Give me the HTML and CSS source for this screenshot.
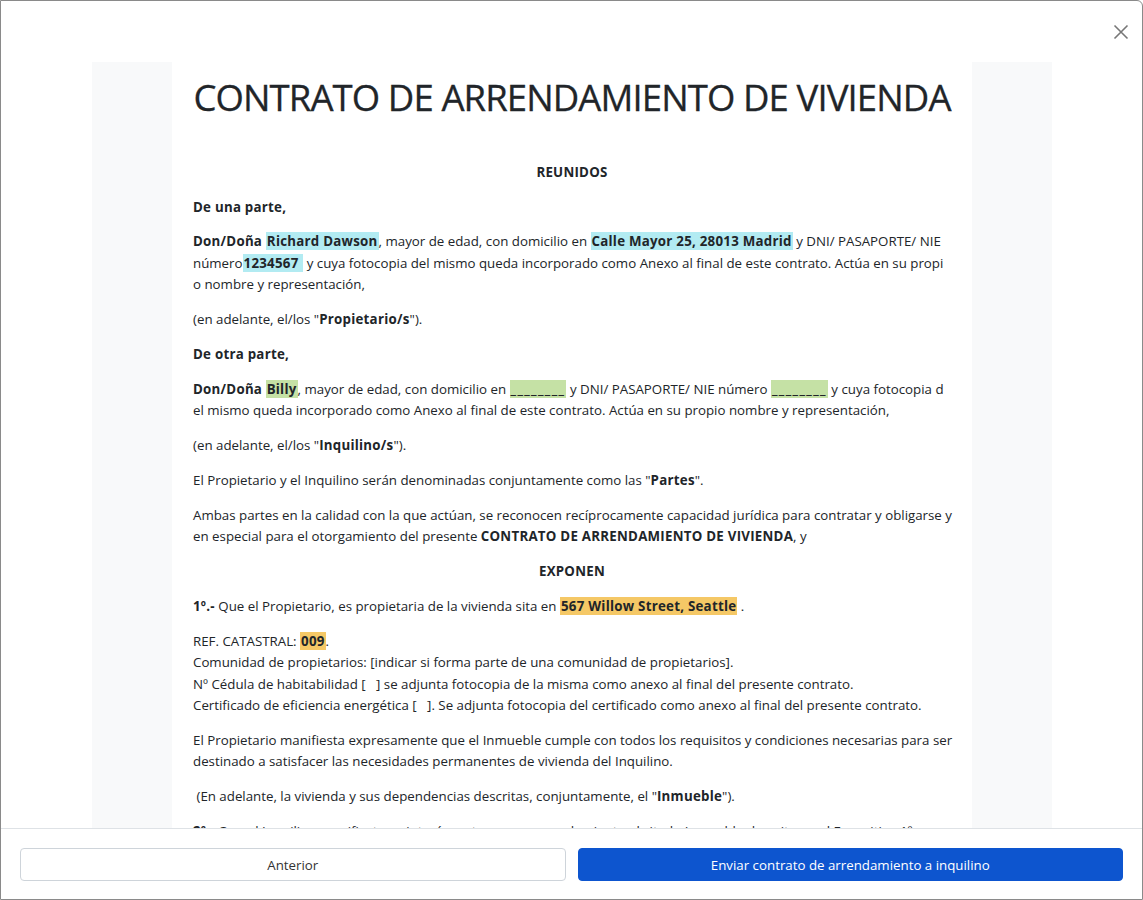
FILE: index.html
```html
<!DOCTYPE html>
<html lang="es">
<head>
<meta charset="utf-8">
<title>Contrato de arrendamiento</title>
<link rel="stylesheet" href="styles.css">
</head>
<body>
<div class="modal">
  <div class="modal-header">
    <button class="close" aria-label="Cerrar">
      <svg width="16" height="16" viewBox="0 0 16 16"><path d="M1.5 1.5 L14.5 14.5 M14.5 1.5 L1.5 14.5" stroke="#777" stroke-width="1.6" fill="none"/></svg>
    </button>
  </div>
  <div class="modal-body">
    <div class="doc-wrap">
      <div class="doc">
        <h1 class="doc-title">CONTRATO DE ARRENDAMIENTO DE VIVIENDA</h1>
        <p class="center"><b>REUNIDOS</b></p>
        <p><b>De una parte,</b></p>
        <p><b>Don/Doña <span class="hl hl-cyan">Richard Dawson</span></b>, mayor de edad, con domicilio en <span class="hl hl-cyan"><b>Calle Mayor 25, 28013 Madrid</b></span> y DNI/ PASAPORTE/ NIE<br>número<span class="hl hl-cyan"><b>1234567&nbsp;</b></span> y cuya fotocopia del mismo queda incorporado como Anexo al final de este contrato. Actúa en su propi<br>o nombre y representación,</p>
        <p>(en adelante, el/los "<b>Propietario/s</b>").</p>
        <p><b>De otra parte,</b></p>
        <p><b>Don/Doña</b> <span class="hl hl-green"><b>Billy</b></span>, mayor de edad, con domicilio en <span class="hl hl-green"><b class="blank">________</b></span> y DNI/ PASAPORTE/ NIE número <span class="hl hl-green"><b class="blank">________</b></span> y cuya fotocopia d<br>el mismo queda incorporado como Anexo al final de este contrato. Actúa en su propio nombre y representación,</p>
        <p>(en adelante, el/los "<b>Inquilino/s</b>").</p>
        <p>El Propietario y el Inquilino serán denominadas conjuntamente como las "<b>Partes</b>".</p>
        <p>Ambas partes en la calidad con la que actúan, se reconocen recíprocamente capacidad jurídica para contratar y obligarse y<br>en especial para el otorgamiento del presente <b>CONTRATO DE ARRENDAMIENTO DE VIVIENDA</b>, y</p>
        <p class="center"><b>EXPONEN</b></p>
        <p><b>1º.-</b> Que el Propietario, es propietaria de la vivienda sita en <span class="hl hl-yellow"><b>567 Willow Street, Seattle</b></span> .</p>
        <p>REF. CATASTRAL: <span class="hl hl-yellow"><b>009</b></span>.<br>Comunidad de propietarios: [indicar si forma parte de una comunidad de propietarios].<br>Nº Cédula de habitabilidad [&nbsp;&nbsp;&nbsp;] se adjunta fotocopia de la misma como anexo al final del presente contrato.<br>Certificado de eficiencia energética [&nbsp;&nbsp;&nbsp;]. Se adjunta fotocopia del certificado como anexo al final del presente contrato.</p>
        <p>El Propietario manifiesta expresamente que el Inmueble cumple con todos los requisitos y condiciones necesarias para ser<br>destinado a satisfacer las necesidades permanentes de vivienda del Inquilino.</p>
        <p>&nbsp;(En adelante, la vivienda y sus dependencias descritas, conjuntamente, el "<b>Inmueble</b>").</p>
        <p><b>2º.-</b> Que el Inquilino manifiesta su interés en tomar en arrendamiento el citado Inmueble descrito en el Expositivo 1º,<br>para su uso como vivienda permanente.</p>
      </div>
    </div>
  </div>
  <div class="modal-footer">
    <button class="btn btn-light">Anterior</button>
    <button class="btn btn-primary">Enviar contrato de arrendamiento a inquilino</button>
  </div>
</div>
</body>
</html>
```

FILE: styles.css
```css
* { box-sizing: border-box; }
html, body { margin: 0; padding: 0; background: #fff; }
body {
  font-family: "Open Sans", "Noto Sans", sans-serif;
  color: #212529;
}
.modal {
  width: 1143px;
  height: 900px;
  border: 1px solid #8a8a8a;
  border-radius: 0 6px 0 0;
  display: flex;
  flex-direction: column;
  overflow: hidden;
  background: #fff;
}
.modal-header {
  height: 61px;
  flex: none;
  display: flex;
  align-items: center;
  justify-content: flex-end;
  padding-right: 13px;
}
.close {
  border: 0;
  background: transparent;
  padding: 0;
  width: 16px;
  height: 16px;
  display: flex;
  cursor: pointer;
}
.modal-body {
  flex: 1;
  overflow: hidden;
  padding: 0 90px 0 91px;
}
.doc-wrap {
  background: #f8f9fa;
  padding: 0 80px;
  min-height: 100%;
}
.doc {
  background: #fff;
  padding: 1px 21px 20px;
  font-size: 13.3px;
  line-height: 21.5px;
}
.doc-title {
  font-size: 36.5px;
  letter-spacing: -0.9px;
  font-weight: 400;
  line-height: 1.2;
  text-align: center;
  margin: 13px 0 42px;
  color: #212529;
  white-space: nowrap;
  -webkit-text-stroke: 0.3px #212529;
}
.doc p { margin: 0 0 13.3px; white-space: nowrap; }
.doc b { font-weight: 700; letter-spacing: 0.25px; }
.doc b.blank { letter-spacing: 1.4px; }
.center { text-align: center; }
.hl { padding: 0 1px; }
.hl-cyan { background: #b2ebf2; }
.hl-green { background: #c5e1a5; }
.hl-yellow { background: #f5c866; }
.modal-footer {
  flex: none;
  border-top: 1px solid #dee2e6;
  padding: 19px 19px 18px;
  display: flex;
  gap: 12px;
}
.btn {
  flex: 1;
  height: 33px;
  border-radius: 4px;
  font-family: "Open Sans", "Noto Sans", sans-serif;
  font-size: 13.3px;
  cursor: pointer;
}
.btn-light {
  background: #fff;
  border: 1px solid #ced4da;
  color: #333;
}
.btn-primary {
  background: #0d55cf;
  border: 1px solid #0d55cf;
  color: #fff;
}
```
